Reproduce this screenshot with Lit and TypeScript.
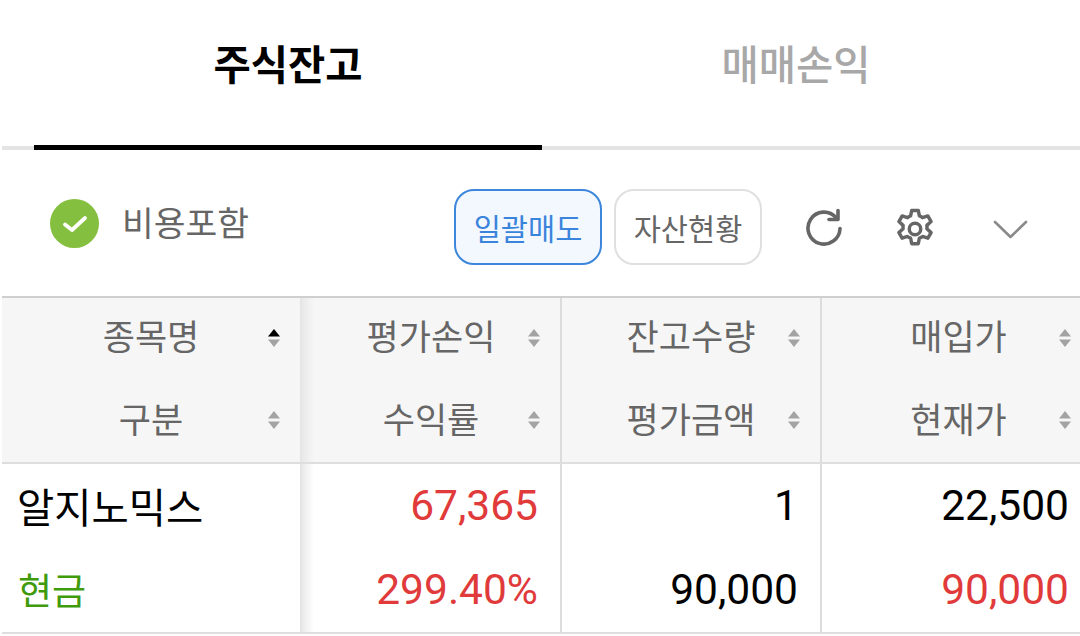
import { LitElement, html, css } from "lit";
import { customElement } from "lit/decorators.js";

const sort = (active = false) => html`<svg class="sort" viewBox="0 0 12 20" width="12" height="20">
  <path d="M6 1 L12 8.6 H0 Z" fill=${active ? "#000" : "#a3a3a3"}></path>
  <path d="M0 11.4 H12 L6 19 Z" fill="#a3a3a3"></path>
</svg>`;

@customElement("app-root")
export class AppRoot extends LitElement {
  static styles = css`
    :host { display: block; width: 1080px; height: 636px; overflow: hidden; background: #fff;
      font-family: "Roboto", "Noto Sans CJK KR", sans-serif; }
    .tabs { display: flex; height: 150px; margin-left: 2px; border-bottom: 4px solid #e4e4e4; box-sizing: border-box; padding-left: 32px; }
    .tab { width: 508px; height: 150px; box-sizing: border-box; display: flex; justify-content: center; padding-top: 37px;
      font-size: 40.5px; line-height: 58px; font-weight: 500; color: #a8a8a8; }
    .tab.on { color: #000; font-weight: 700; border-bottom: 5px solid #000; }
    .toolbar { height: 146px; display: flex; align-items: center; padding-left: 50px; box-sizing: border-box; }
    .check { width: 49px; height: 49px; flex: none; }
    .incl { font-size: 34.5px; color: #666; margin-left: 23px; width: 332px; position: relative; top: -2px; }
    .btn { height: 76px; box-sizing: border-box; border-radius: 20px; border: 2px solid #e0e0e0; color: #666; font-size: 29.5px;
      display: flex; align-items: center; justify-content: center; width: 148px; background: #fff; margin-top: 8px; flex: none; }
    .btn.blue { border-color: #3c86dc; color: #3a84dc; background: #f3f8fe; margin-right: 12px; }
    .ic { flex: none; }
    .i1 { margin-left: 43px; margin-top: 9px; }
    .i2 { margin-left: 47px; margin-top: 11px; }
    .i3 { margin-left: 53px; margin-top: 14px; }
    .table { margin-left: 2px; display: grid; grid-template-columns: 298px 260px 260px 260px; border-top: 2px solid #cfcfcf; position: relative; }
    .head { display: grid; grid-template-columns: subgrid; grid-column: 1 / -1; background: #f6f6f6; border-bottom: 2px solid #dedede; height: 166px; box-sizing: border-box; }
    .body { display: grid; grid-template-columns: subgrid; grid-column: 1 / -1; border-bottom: 2px solid #dedede; height: 170px; box-sizing: border-box; }
    .col { display: grid; grid-template-rows: 1fr 1fr; border-left: 2px solid #dcdcdc; min-width: 0; }
    .col:first-child { border-left: none; position: relative; background: inherit; }
    .col:first-child::after { content: ""; position: absolute; left: 100%; top: 0; bottom: 0; width: 14px;
      background: linear-gradient(to right, #e6e6e6, rgba(240,240,240,0)); }
    .hc { display: flex; align-items: center; justify-content: center; font-size: 35px; color: #666; position: relative; }
    .col:last-child .hc { padding-left: 15px; }
    .hc .t { position: relative; top: -4px; }
    .hc:first-child .t { top: -5px; }
    .sort { position: absolute; right: 20px; top: 50%; margin-top: -11px; }
    .col:last-child .sort { right: 9px; }
    .bc { display: flex; align-items: center; justify-content: flex-end; font-size: 42.5px; color: #000; padding-right: 22px; position: relative; top: -1px; }
    .col:last-child .bc { padding-right: 11px; }
    .col:first-child .bc { justify-content: flex-start; padding: 0 0 0 15px; }
    .red { color: #e03a3a; }
    .col:first-child .green { color: #3f9a0c; font-size: 37px; padding-left: 16px; }
    .col:first-child .name { font-size: 40.5px; }
  `;

  render() {
    const head: [string, string][] = [
      ["종목명", "구분"],
      ["평가손익", "수익률"],
      ["잔고수량", "평가금액"],
      ["매입가", "현재가"],
    ];
    const body = [
      [html`<div class="bc name">알지노믹스</div>`, html`<div class="bc green">현금</div>`],
      [html`<div class="bc red">67,365</div>`, html`<div class="bc red">299.40%</div>`],
      [html`<div class="bc">1</div>`, html`<div class="bc">90,000</div>`],
      [html`<div class="bc">22,500</div>`, html`<div class="bc red">90,000</div>`],
    ];
    return html`
      <div class="tabs">
        <div class="tab on">주식잔고</div>
        <div class="tab">매매손익</div>
      </div>
      <div class="toolbar">
        <svg class="check" viewBox="0 0 49 49">
          <circle cx="24.5" cy="24.5" r="24.5" fill="#85bf3f"></circle>
          <path d="M15 25.5 L22 31 L35 19" fill="none" stroke="#fff" stroke-width="3.8" stroke-linecap="round" stroke-linejoin="round"></path>
        </svg>
        <span class="incl">비용포함</span>
        <div class="btn blue">일괄매도</div>
        <div class="btn">자산현황</div>
        <svg class="ic i1" width="40" height="40" viewBox="0 0 40 40" fill="none" stroke="#666" stroke-width="3.6" stroke-linecap="round" stroke-linejoin="round">
          <path d="M35 20.5 A16 16 0 1 1 31 9.5"></path>
          <path d="M33 2.5 V11.5 H24"></path>
        </svg>
        <svg class="ic i2" width="46" height="46" viewBox="0 0 24 24" fill="none" stroke="#666" stroke-width="1.8" stroke-linejoin="round">
          <path d="M10.3 2.3h3.4l.6 2.9c.6.2 1.100.5 1.600.9l2.800-.9 1.700 2.900-2.200 2c.1.600.1 1.200 0 1.800l2.200 2-1.700 2.900-2.800-.9c-.5.400-1 .7-1.600.9l-.6 2.900h-3.400l-.6-2.900c-.6-.2-1.100-.5-1.600-.9l-2.800.9-1.700-2.900 2.200-2c-.1-.6-.1-1.200 0-1.800l-2.200-2 1.700-2.900 2.800.9c.5-.4 1-.7 1.600-.9z"></path>
          <circle cx="12" cy="12" r="3"></circle>
        </svg>
        <svg class="ic i3" width="38" height="24" viewBox="0 0 38 24" fill="none" stroke="#8a8a8a" stroke-width="2.6" stroke-linecap="round" stroke-linejoin="round">
          <path d="M4 4 L19.500 19 L35 4"></path>
        </svg>
      </div>
      <div class="table">
        <div class="head">
          ${head.map((c, i) => html`<div class="col">
            <div class="hc"><span class="t">${c[0]}</span>${sort(i === 0)}</div>
            <div class="hc"><span class="t">${c[1]}</span>${sort()}</div>
          </div>`)}
        </div>
        <div class="body">
          ${body.map((c) => html`<div class="col">${c[0]}${c[1]}</div>`)}
        </div>
      </div>
    `;
  }
}
